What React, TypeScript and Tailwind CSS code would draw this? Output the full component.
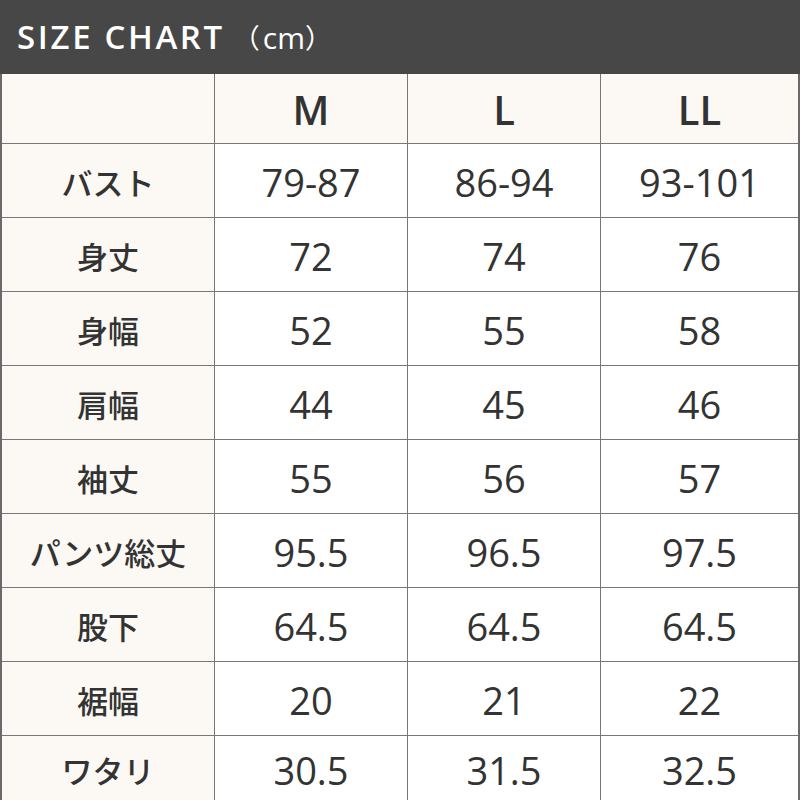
const SIZES = ["M", "L", "LL"];

const ROWS: { label: string; values: string[] }[] = [
  { label: "バスト", values: ["79-87", "86-94", "93-101"] },
  { label: "身丈", values: ["72", "74", "76"] },
  { label: "身幅", values: ["52", "55", "58"] },
  { label: "肩幅", values: ["44", "45", "46"] },
  { label: "袖丈", values: ["55", "56", "57"] },
  { label: "パンツ総丈", values: ["95.5", "96.5", "97.5"] },
  { label: "股下", values: ["64.5", "64.5", "64.5"] },
  { label: "裾幅", values: ["20", "21", "22"] },
  { label: "ワタリ", values: ["30.5", "31.5", "32.5"] },
];

const latin = "font-['Open_Sans','Noto_Sans',sans-serif]";
const jp = "font-['Noto_Sans_CJK_JP','Noto_Sans',sans-serif]";

export default function App() {
  return (
    <div className="h-[800px] w-[800px] overflow-hidden bg-white text-[#333]">
      <div className="flex h-[74px] items-center bg-[#474747] pl-[17px] text-white">
        <span className={`${latin} text-[33px] font-semibold tracking-[0.08em]`}>SIZE CHART</span>
        <span className="ml-[8px] flex items-center">
          <span className={`${jp} text-[27px]`}>（</span>
          <span className={`${latin} pl-[3px] text-[30px] font-medium`}>cm</span>
          <span className={`${jp} text-[27px]`}>）</span>
        </span>
      </div>

      <div className="border-x-2 border-[#6a6a6a]">
        <div className="grid h-[69px] grid-cols-[212px_193px_193px_1fr] bg-[#fcf9f5]">
          <div />
          {SIZES.map((s) => (
            <div
              key={s}
              className={`${latin} flex items-center justify-center border-l border-[#777] pt-[2px] text-[40px] font-semibold`}
            >
              {s}
            </div>
          ))}
        </div>

        {ROWS.map((row, r) => (
          <div
            key={row.label}
            className={
              r === ROWS.length - 1
                ? "grid h-[67px] grid-cols-[212px_193px_193px_1fr] border-y border-[#777]"
                : "grid h-[74px] grid-cols-[212px_193px_193px_1fr] border-t border-[#777]"
            }
          >
            <div
              className={`${jp} flex items-center justify-center bg-[#fcf9f5] pt-[3px] text-[31px] font-medium`}
            >
              {row.label}
            </div>
            {row.values.map((v, i) => (
              <div
                key={i}
                className={`${latin} flex items-center justify-center border-l border-[#777] pt-[4px] text-[38px]`}
              >
                {v}
              </div>
            ))}
          </div>
        ))}
      </div>
    </div>
  );
}
